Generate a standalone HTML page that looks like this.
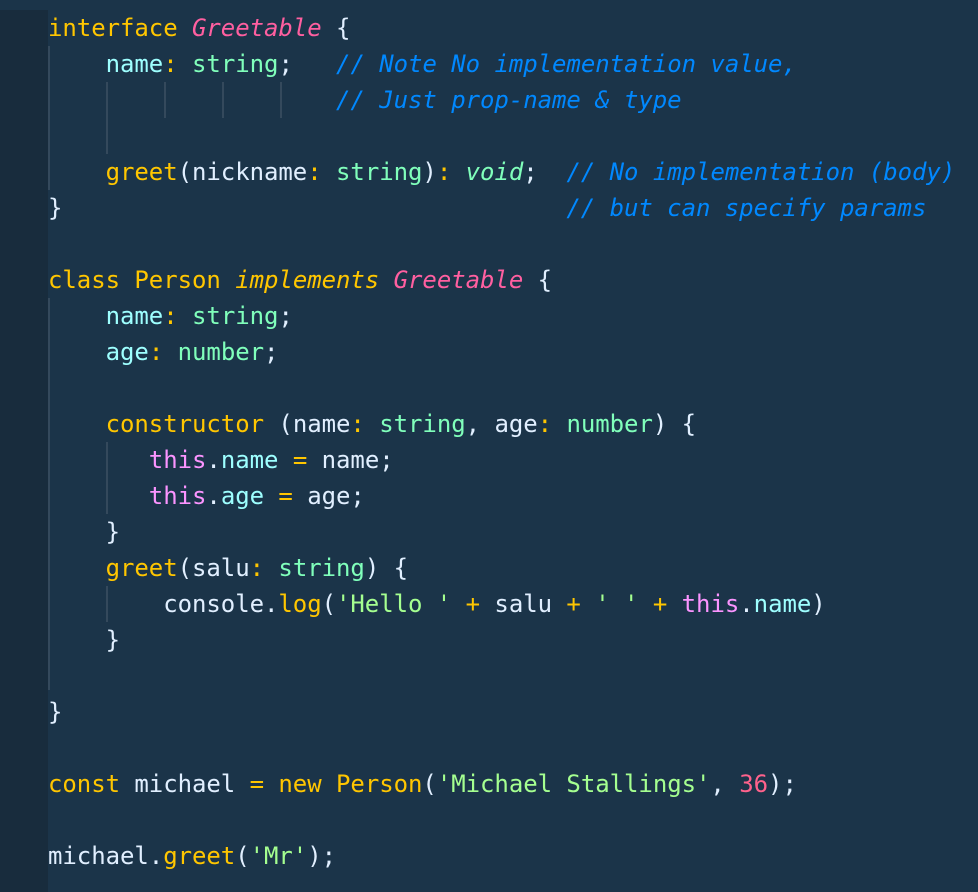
<!DOCTYPE html>
<html><head><meta charset="utf-8"><style>
html,body{margin:0;padding:0;}
body{width:978px;height:892px;background:#1b3449;position:relative;overflow:hidden;font-family:"DejaVu Sans Mono","Liberation Mono",monospace;font-size:24px;color:#e1efff;}
.gut{position:absolute;left:0;top:10px;width:48px;height:882px;background:#182c3d;}
pre{position:absolute;left:48px;top:10px;margin:0;font:inherit;line-height:36px;white-space:pre;letter-spacing:-0.05px;}
.g{position:absolute;width:2px;background:#34495c;}
.k{color:#ffc600}.p{color:#ff5fa0;font-style:italic}.pi{color:#ffc600;font-style:italic}
.n{color:#9effff}.t{color:#80ffbb}.c{color:#0088ff;font-style:italic}.th{color:#fb94ff}
.s{color:#a5ff90}.v{color:#80ffbb;font-style:italic}.num{color:#ff628c}
</style></head><body>
<div class="gut"></div>
<div class="g" style="left:48px;top:46px;height:144px"></div>
<div class="g" style="left:106px;top:82px;height:72px"></div>
<div class="g" style="left:164px;top:82px;height:36px"></div>
<div class="g" style="left:222px;top:82px;height:36px"></div>
<div class="g" style="left:280px;top:82px;height:36px"></div>
<div class="g" style="left:48px;top:298px;height:392px"></div>
<div class="g" style="left:106px;top:442px;height:72px"></div>
<div class="g" style="left:106px;top:586px;height:36px"></div>
<pre><span class="k">interface</span> <span class="p">Greetable</span> {
    <span class="n">name</span><span class="k">:</span> <span class="t">string</span>;   <span class="c">// Note No implementation value,</span>
                    <span class="c">// Just prop-name &amp; type</span>

    <span class="k">greet</span>(nickname<span class="k">:</span> <span class="t">string</span>)<span class="k">:</span> <span class="v">void</span>;  <span class="c">// No implementation (body)</span>
}                                   <span class="c">// but can specify params</span>

<span class="k">class</span> <span class="k">Person</span> <span class="pi">implements</span> <span class="p">Greetable</span> {
    <span class="n">name</span><span class="k">:</span> <span class="t">string</span>;
    <span class="n">age</span><span class="k">:</span> <span class="t">number</span>;

    <span class="k">constructor</span> (name<span class="k">:</span> <span class="t">string</span>, age<span class="k">:</span> <span class="t">number</span>) {
       <span class="th">this</span>.<span class="n">name</span> <span class="k">=</span> name;
       <span class="th">this</span>.<span class="n">age</span> <span class="k">=</span> age;
    }
    <span class="k">greet</span>(salu<span class="k">:</span> <span class="t">string</span>) {
        console.<span class="k">log</span>(<span class="s">'Hello '</span> <span class="k">+</span> salu <span class="k">+</span> <span class="s">' '</span> <span class="k">+</span> <span class="th">this</span>.<span class="n">name</span>)
    }

}

<span class="k">const</span> michael <span class="k">=</span> <span class="k">new</span> <span class="k">Person</span>(<span class="s">'Michael Stallings'</span>, <span class="num">36</span>);

michael.<span class="k">greet</span>(<span class="s">'Mr'</span>);</pre>
</body></html>
